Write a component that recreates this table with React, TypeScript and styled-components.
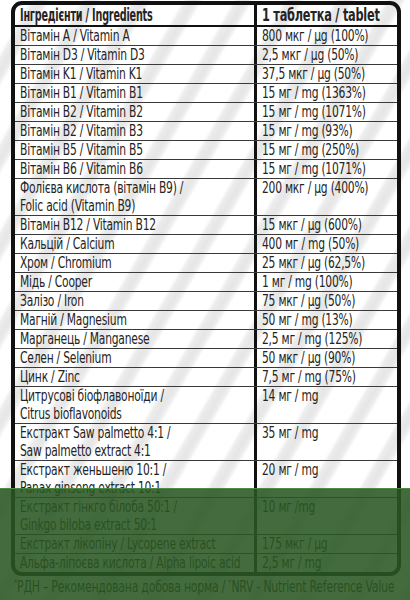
import styled, { createGlobalStyle } from "styled-components";

const GlobalStyle = createGlobalStyle`
  html, body {
    margin: 0;
    padding: 0;
    background: #ffffff;
  }
`;

const Page = styled.div`
  position: relative;
  width: 410px;
  height: 600px;
  overflow: hidden;
  padding: 1px 9px 0 11px;
  box-sizing: border-box;

  background: repeating-linear-gradient(
    120deg,
    #ffffff 0px,
    #ffffff 26px,
    #ececec 30px,
    #e6e6e6 36px,
    #ececec 40px,
    #ffffff 44px
  );

  font-family: "DejaVu Sans Condensed", "DejaVu Sans", "Liberation Sans", sans-serif;
  font-stretch: condensed;
  color: #242424;
`;

const Card = styled.div`
  border: 4px solid #111111;
  border-radius: 11px;
  overflow: hidden;
`;

const Row = styled.div<{ $header?: boolean; $last?: boolean }>`
  display: grid;
  grid-template-columns: 239px minmax(0, 1fr);
  border-bottom: ${(props) => {
    if (props.$last) return "none";
    return props.$header ? "2px solid #111111" : "1px solid #3a3a3a";
  }};
`;

const Cell = styled.div<{ $header?: boolean; $value?: boolean }>`
  padding: 0 4px 0 5px;
  font-size: ${(props) => (props.$header ? "17px" : "16px")};
  font-weight: ${(props) => (props.$header ? 700 : 400)};
  line-height: ${(props) => (props.$header ? "20px" : "18px")};
  white-space: nowrap;
  overflow: hidden;
  border-left: ${(props) => (props.$value ? "3px solid #111111" : "none")};
`;

// the print uses a condensed face; squeeze DejaVu Condensed to its width
const Narrow = styled.span<{ $scale?: number }>`
  display: block;
  letter-spacing: -0.3px;
  transform: scaleX(${(props) => props.$scale ?? 0.745});
  transform-origin: left center;
`;

const Footer = styled.div`
  padding: 2px 0 0 3px;
  font-size: 15px;
  line-height: 18px;
  white-space: nowrap;

  sup {
    font-size: 9px;
    vertical-align: top;
    line-height: 10px;
  }
`;

const GreenOverlay = styled.div`
  position: absolute;
  left: 0;
  right: 0;
  top: 488px;
  bottom: 0;
  background: rgba(42, 86, 34, 0.88);
  border-top: 1px solid #4e8a45;
`;

const rows: { name: string[]; value: string }[] = [
  { name: ["Вітамін A / Vitamin A"], value: "800 мкг / µg (100%)" },
  { name: ["Вітамін D3 / Vitamin D3"], value: "2,5 мкг / µg (50%)" },
  { name: ["Вітамін K1 / Vitamin K1"], value: "37,5 мкг / µg (50%)" },
  { name: ["Вітамін B1 / Vitamin B1"], value: "15 мг / mg (1363%)" },
  { name: ["Вітамін B2 / Vitamin B2"], value: "15 мг / mg (1071%)" },
  { name: ["Вітамін B2 / Vitamin B3"], value: "15 мг / mg (93%)" },
  { name: ["Вітамін B5 / Vitamin B5"], value: "15 мг / mg (250%)" },
  { name: ["Вітамін B6 / Vitamin B6"], value: "15 мг / mg (1071%)" },
  {
    name: ["Фолієва кислота (вітамін B9) /", "Folic acid (Vitamin B9)"],
    value: "200 мкг / µg (400%)",
  },
  { name: ["Вітамін B12 / Vitamin B12"], value: "15 мкг / µg (600%)" },
  { name: ["Кальцій / Calcium"], value: "400 мг / mg (50%)" },
  { name: ["Хром / Chromium"], value: "25 мкг / µg (62,5%)" },
  { name: ["Мідь / Cooper"], value: "1 мг / mg (100%)" },
  { name: ["Залізо / Iron"], value: "75 мкг / µg (50%)" },
  { name: ["Магній / Magnesium"], value: "50 мг / mg (13%)" },
  { name: ["Марганець / Manganese"], value: "2,5 мг / mg (125%)" },
  { name: ["Селен / Selenium"], value: "50 мкг / µg (90%)" },
  { name: ["Цинк / Zinc"], value: "7,5 мг / mg (75%)" },
  {
    name: ["Цитрусові біофлавоноїди /", "Citrus bioflavonoids"],
    value: "14 мг / mg",
  },
  {
    name: ["Екстракт Saw palmetto 4:1 /", "Saw palmetto extract 4:1"],
    value: "35 мг / mg",
  },
  {
    name: ["Екстракт женьшеню 10:1 /", "Panax ginseng extract 10:1"],
    value: "20 мг / mg",
  },
  {
    name: ["Екстракт гінкго білоба 50:1 /", "Ginkgo biloba extract 50:1"],
    value: "10 мг /mg",
  },
  { name: ["Екстракт лікопіну / Lycopene extract"], value: "175 мкг / µg" },
  { name: ["Альфа-ліпоєва кислота / Alpha lipoic acid"], value: "2,5 мг / mg" },
];

const App = () => {
  return (
    <>
      <GlobalStyle />
      <Page>
        <Card>
          <Row $header>
            <Cell $header>
              <Narrow $scale={0.63}>Інгредієнти / Ingredients</Narrow>
            </Cell>
            <Cell $header $value>
              <Narrow $scale={0.74}>1 таблетка / tablet</Narrow>
            </Cell>
          </Row>
          {rows.map((row, index) => {
            return (
              <Row key={index} $last={index === rows.length - 1}>
                <Cell>
                  {row.name.map((line) => (
                    <Narrow key={line}>{line}</Narrow>
                  ))}
                </Cell>
                <Cell $value>
                  <Narrow>{row.value}</Narrow>
                </Cell>
              </Row>
            );
          })}
        </Card>
        <Footer>
          <Narrow $scale={0.81}>
            <sup>*</sup>РДН – Рекомендована добова норма / <sup>*</sup>NRV - Nutrient Reference Value
          </Narrow>
        </Footer>
        <GreenOverlay />
      </Page>
    </>
  );
};

export default App;
